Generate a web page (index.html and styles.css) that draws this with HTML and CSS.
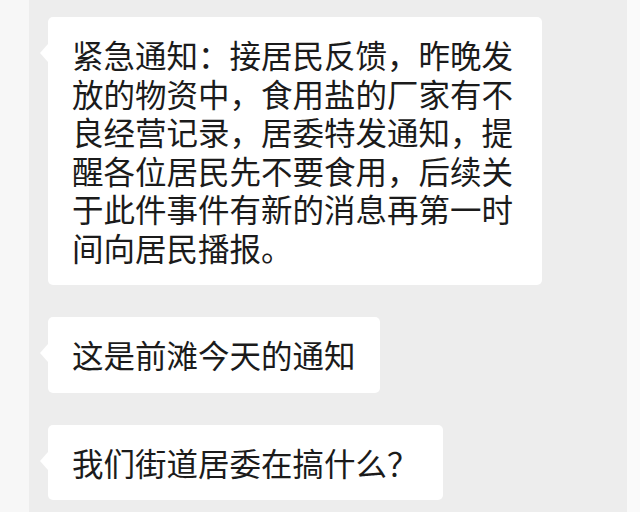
FILE: index.html
```html
<!DOCTYPE html>
<html lang="zh-CN">
<head>
<meta charset="utf-8">
<link rel="stylesheet" href="styles.css">
</head>
<body>
<div class="screen">
  <div class="side side-left"></div>
  <main class="chat">
    <div class="bubble bubble-long">紧急通知：接居民反馈，昨晚发放的物资中，食用盐的厂家有不良经营记录，居委特发通知，提醒各位居民先不要食用，后续关于此件事件有新的消息再第一时间向居民播报。</div>
    <div class="bubble">这是前滩今天的通知</div>
    <div class="bubble">我们街道居委在搞什么？</div>
  </main>
  <div class="side side-right"></div>
</div>
</body>
</html>
```
FILE: styles.css
```css
html, body {
  margin: 0;
  padding: 0;
}
body {
  width: 640px;
  height: 512px;
  overflow: hidden;
  background: #f8f8f8;
}
.screen {
  display: flex;
  height: 512px;
}
.side-left {
  width: 29px;
  background: #f7f7f7;
}
.side-right {
  width: 13px;
  background: #fafafa;
}
.chat {
  width: 598px;
  background: #ededed;
  padding: 17px 0 0 19px;
  box-sizing: border-box;
  display: flex;
  flex-direction: column;
  align-items: flex-start;
  gap: 32px;
}
.bubble {
  position: relative;
  background: #fff;
  border-radius: 5px;
  padding: 18px 24px 19px 24px;
  font-family: "Noto Sans CJK SC", "Noto Sans", sans-serif;
  font-size: 31.5px;
  line-height: 38.5px;
  color: #1b1b1b;
  max-width: 446px;
}
.bubble::before {
  content: "";
  position: absolute;
  left: -8px;
  top: 27px;
  border-right: 8px solid #fff;
  border-top: 9px solid transparent;
  border-bottom: 9px solid transparent;
}
```
